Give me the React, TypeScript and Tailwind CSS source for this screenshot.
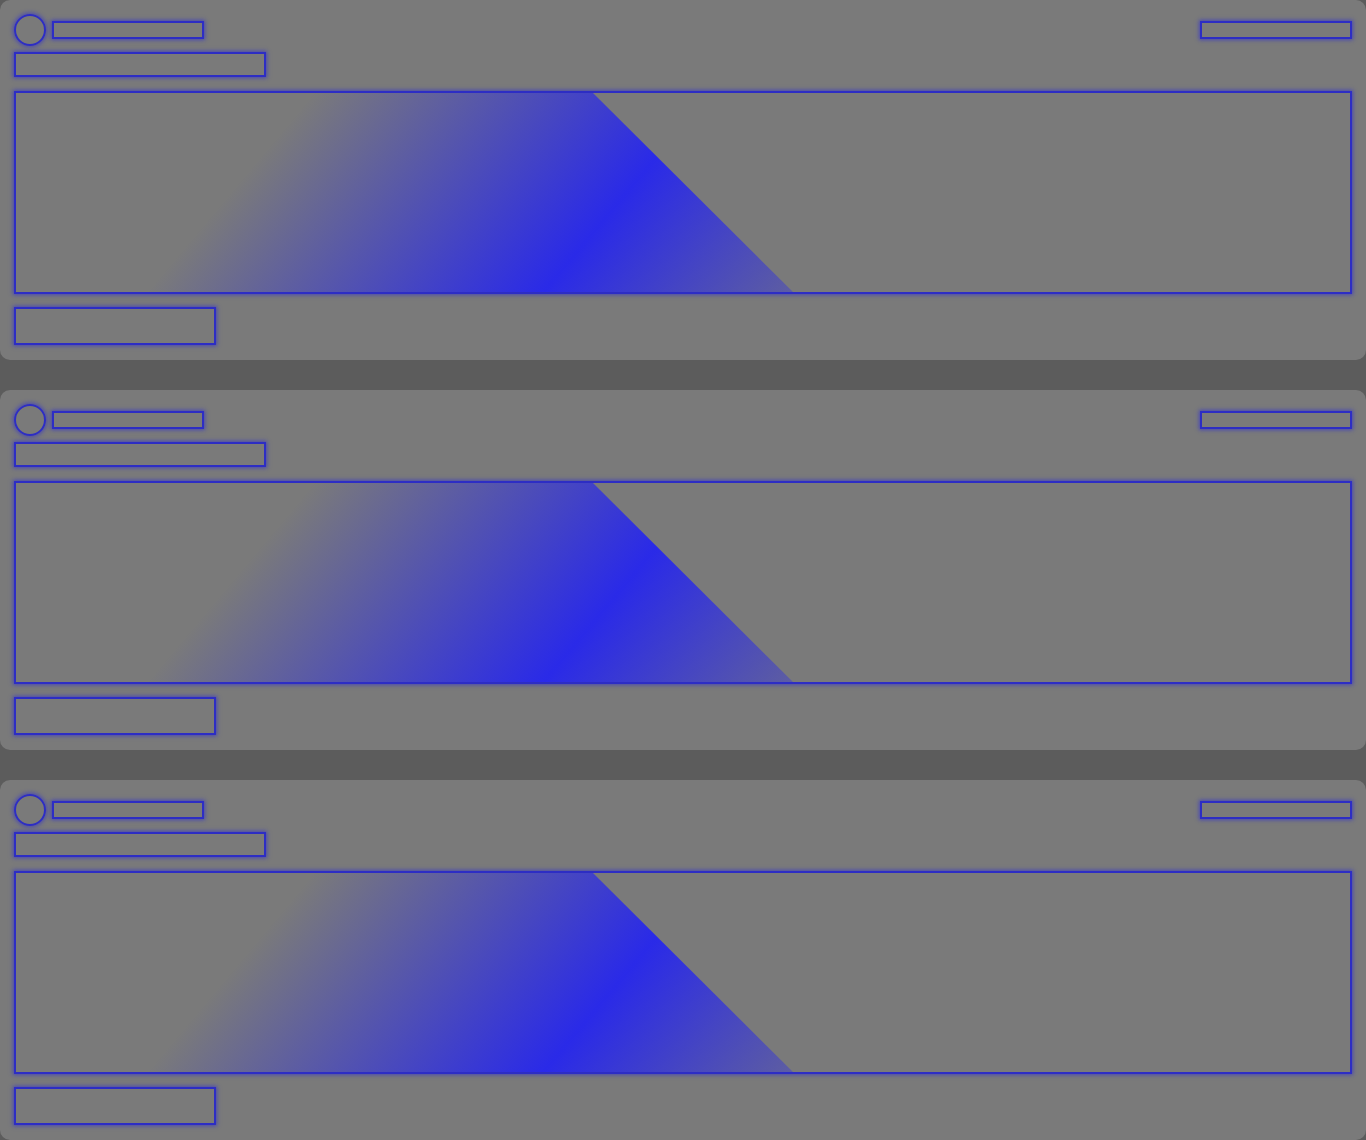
import React from "react";

const line = "border-2 border-[#2d2dc4] shadow-[0_0_4px_1px_rgba(50,50,205,0.7)]";

function Card() {
  return (
    <div className="bg-[#7a7a7a] rounded-[10px] h-[360px] px-[14px] pt-[14px] flex flex-col">
      <div className="flex items-center justify-between h-8">
        <div className="flex items-center">
          <div className={`w-8 h-8 rounded-full ${line}`} />
          <div className={`ml-[6px] w-[152px] h-[18px] ${line}`} />
        </div>
        <div className={`w-[152px] h-[18px] ${line}`} />
      </div>
      <div className={`mt-[6px] w-[252px] h-[25px] ${line}`} />
      <div className={`mt-[14px] h-[203px] relative overflow-hidden ${line}`}>
        <div className="absolute inset-0 bg-[linear-gradient(130deg,rgba(43,43,232,0)_228px,#2a2ae8_532px,rgba(43,43,232,0)_830px)] [clip-path:polygon(0_0,577px_0,777px_100%,0_100%)]" />
      </div>
      <div className={`mt-[13px] w-[202px] h-[38px] ${line}`} />
    </div>
  );
}

export default function App() {
  return (
    <div className="bg-[#5c5c5c] min-h-[1140px] flex flex-col gap-[30px]">
      <Card />
      <Card />
      <Card />
    </div>
  );
}
